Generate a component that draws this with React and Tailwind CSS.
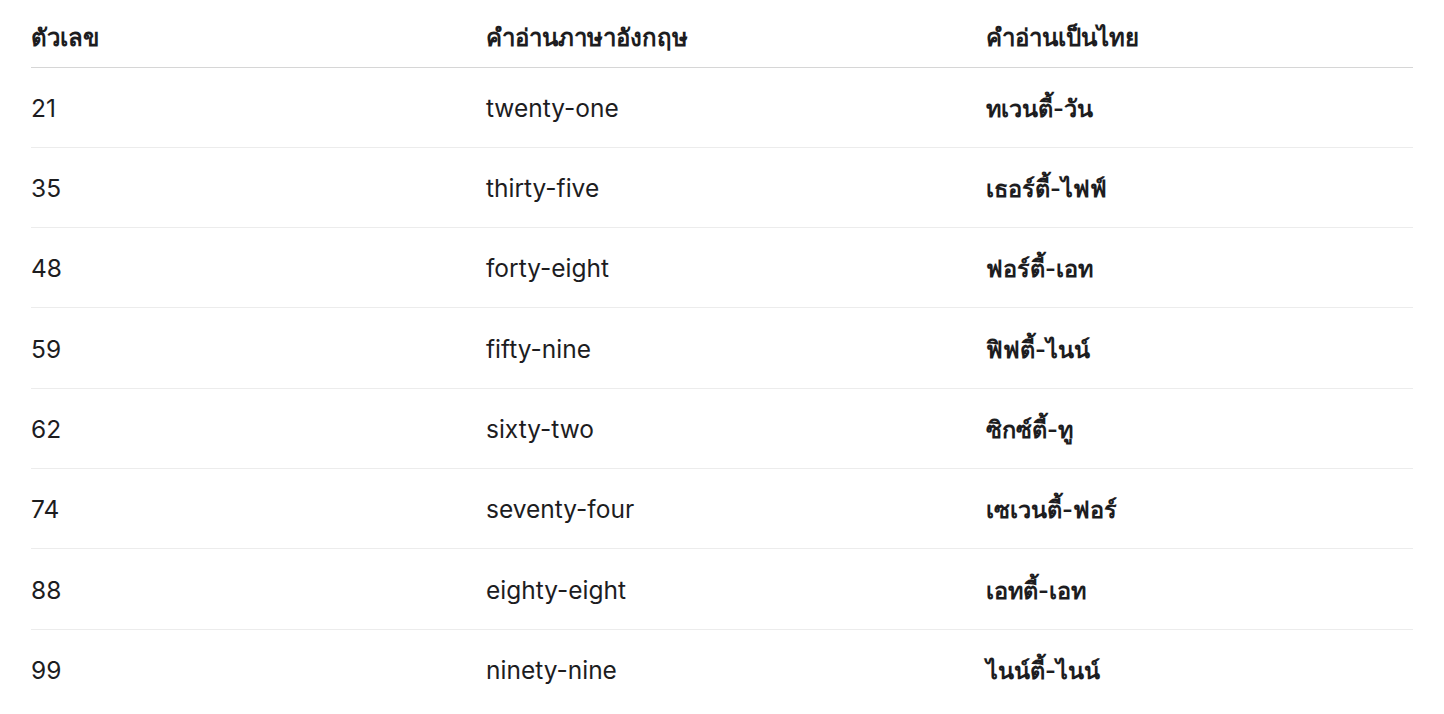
const rows = [
  ["21", "twenty-one", "ทเวนตี้-วัน"],
  ["35", "thirty-five", "เธอร์ตี้-ไฟฟ์"],
  ["48", "forty-eight", "ฟอร์ตี้-เอท"],
  ["59", "fifty-nine", "ฟิฟตี้-ไนน์"],
  ["62", "sixty-two", "ซิกซ์ตี้-ทู"],
  ["74", "seventy-four", "เซเวนตี้-ฟอร์"],
  ["88", "eighty-eight", "เอทตี้-เอท"],
  ["99", "ninety-nine", "ไนน์ตี้-ไนน์"],
];

export default function App() {
  return (
    <div className="min-h-screen bg-white px-[31px] text-[#1d1d1f] font-['Inter','Noto_Sans',sans-serif]">
      <table className="w-full table-fixed border-collapse">
        <colgroup>
          <col className="w-[455px]" />
          <col className="w-[500px]" />
          <col />
        </colgroup>
        <thead>
          <tr className="h-[67px] border-b border-[#d6d6d6]">
            <th className="text-left align-middle pt-[9px] text-[24px] font-bold">ตัวเลข</th>
            <th className="text-left align-middle pt-[9px] text-[24px] font-bold">คำอ่านภาษาอังกฤษ</th>
            <th className="text-left align-middle pt-[9px] text-[24px] font-bold">คำอ่านเป็นไทย</th>
          </tr>
        </thead>
        <tbody>
          {rows.map((r, i) => (
            <tr key={r[0]} className={`h-[80.33px] ${i < rows.length - 1 ? "border-b border-[#ececec]" : ""}`}>
              <td className="align-middle pt-[2px] text-[24.5px]">{r[0]}</td>
              <td className="align-middle pt-[2px] text-[24.5px]">{r[1]}</td>
              <td className="align-middle pt-[2px] text-[23.5px] font-semibold">{r[2]}</td>
            </tr>
          ))}
        </tbody>
      </table>
    </div>
  );
}
